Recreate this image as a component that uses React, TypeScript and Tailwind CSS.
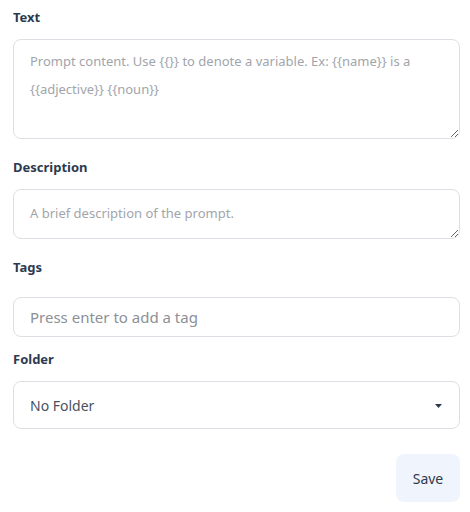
export default function App() {
  return (
    <div className="w-[470px] h-[512px] bg-white font-['Noto_Sans',sans-serif] pl-[13px] pr-[10px]">
      <div className="flex flex-col">
        {/* Text */}
        <label className="mt-[7px] h-5 leading-5 text-[13px] font-bold text-[#2d3a4f]">Text</label>
        <textarea
          className="mt-3 h-[100px] w-full rounded-lg border border-[#dcdfe4] px-4 py-[7px] text-[13px] leading-[28px] text-[#374151] placeholder:text-[#a1a5ab] outline-none"
          placeholder="Prompt content. Use {{}} to denote a variable. Ex: {{name}} is a {{adjective}} {{noun}}"
        />

        {/* Description */}
        <label className="mt-[18px] h-5 leading-5 text-[13px] font-bold text-[#2d3a4f]">Description</label>
        <textarea
          className="mt-3 h-[50px] w-full rounded-lg border border-[#dcdfe4] px-4 py-[9px] text-[13px] leading-[28px] text-[#374151] placeholder:text-[#a1a5ab] outline-none"
          placeholder="A brief description of the prompt."
        />

        {/* Tags */}
        <label className="mt-[18px] h-5 leading-5 text-[13px] font-bold text-[#2d3a4f]">Tags</label>
        <input
          className="mt-5 h-[40px] w-full rounded-lg border border-[#dcdfe4] px-4 text-[15px] text-[#374151] placeholder:text-[#8c9097] outline-none"
          placeholder="Press enter to add a tag"
        />

        {/* Folder */}
        <label className="mt-3 h-5 leading-5 text-[13px] font-bold text-[#2d3a4f]">Folder</label>
        <div className="mt-3 h-[48px] w-full rounded-lg border border-[#dcdfe4] pl-4 pr-[17px] flex items-center justify-between">
          <span className="text-[14px] text-[#4b5160]">No Folder</span>
          <svg width="7" height="4" viewBox="0 0 7 4" className="mt-px">
            <path d="M0 0h7L3.5 4z" fill="#2d3a4f" />
          </svg>
        </div>

        <div className="mt-[25px] flex justify-end">
          <button className="h-12 w-16 rounded-lg bg-[#f0f4fc] text-[14px] text-[#2d3a4f]">Save</button>
        </div>
      </div>
    </div>
  );
}
